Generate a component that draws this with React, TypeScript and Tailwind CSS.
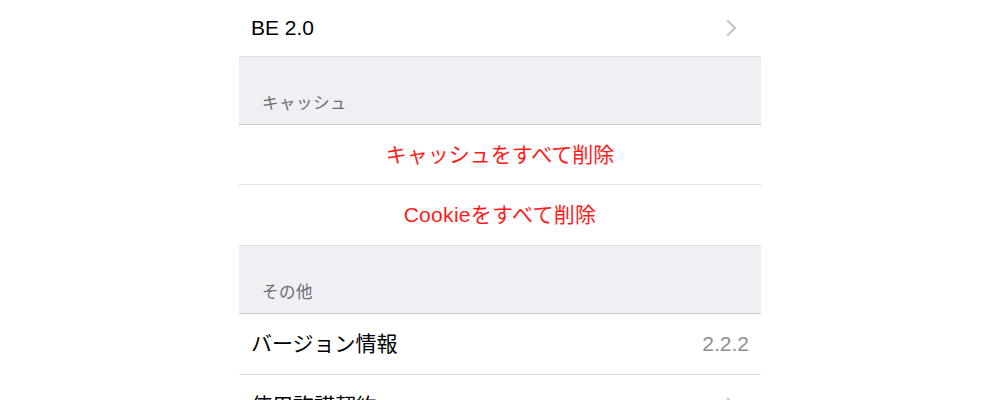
const font = "font-['Liberation_Sans','Noto_Sans_CJK_JP',sans-serif]";

function Chevron() {
  return (
    <svg width="11" height="18" viewBox="0 0 11 18" fill="none" className="shrink-0">
      <path d="M2 2l7 7-7 7" stroke="#c4c4c9" strokeWidth="2.2" strokeLinecap="round" strokeLinejoin="round" />
    </svg>
  );
}

function Row({ children, height = "h-[61px]", border = true }: { children: React.ReactNode; height?: string; border?: boolean }) {
  return (
    <div className={`${height} shrink-0 flex items-center px-3 bg-white ${border ? "border-b border-[#e0e0e3]" : ""}`}>
      {children}
    </div>
  );
}

function Header({ title }: { title: string }) {
  return (
    <div className="h-[68px] shrink-0 flex items-end pb-[13px] pl-[23px] bg-[#efeff4] border-b border-[#c8c7cc]">
      <span className="text-[16.5px] leading-none text-[#6d6d72] tracking-[0.5px]">{title}</span>
    </div>
  );
}

export default function App() {
  return (
    <div className={`w-full h-[400px] overflow-hidden bg-white flex justify-center ${font}`}>
      <div className="w-[522px] flex flex-col">
        <Row height="h-[57px]">
          <span className="text-[21px] text-black flex-1">BE 2.0</span>
          <div className="mr-[12px]">
            <Chevron />
          </div>
        </Row>
        <Header title="キャッシュ" />
        <Row height="h-[60px]">
          <span className="flex-1 text-center text-[21px] text-[#ff1a1a]">キャッシュをすべて削除</span>
        </Row>
        <Row>
          <span className="flex-1 text-center text-[21px] text-[#ff1a1a] tracking-[0.3px]">Cookieをすべて削除</span>
        </Row>
        <Header title="その他" />
        <Row>
          <span className="flex-1 text-[21px] text-black">バージョン情報</span>
          <span className="text-[21px] text-[#8e8e93]">2.2.2</span>
        </Row>
        <Row border={false}>
          <span className="flex-1 text-[21px] text-black">使用許諾契約</span>
          <div className="mr-[12px]">
            <Chevron />
          </div>
        </Row>
      </div>
    </div>
  );
}
